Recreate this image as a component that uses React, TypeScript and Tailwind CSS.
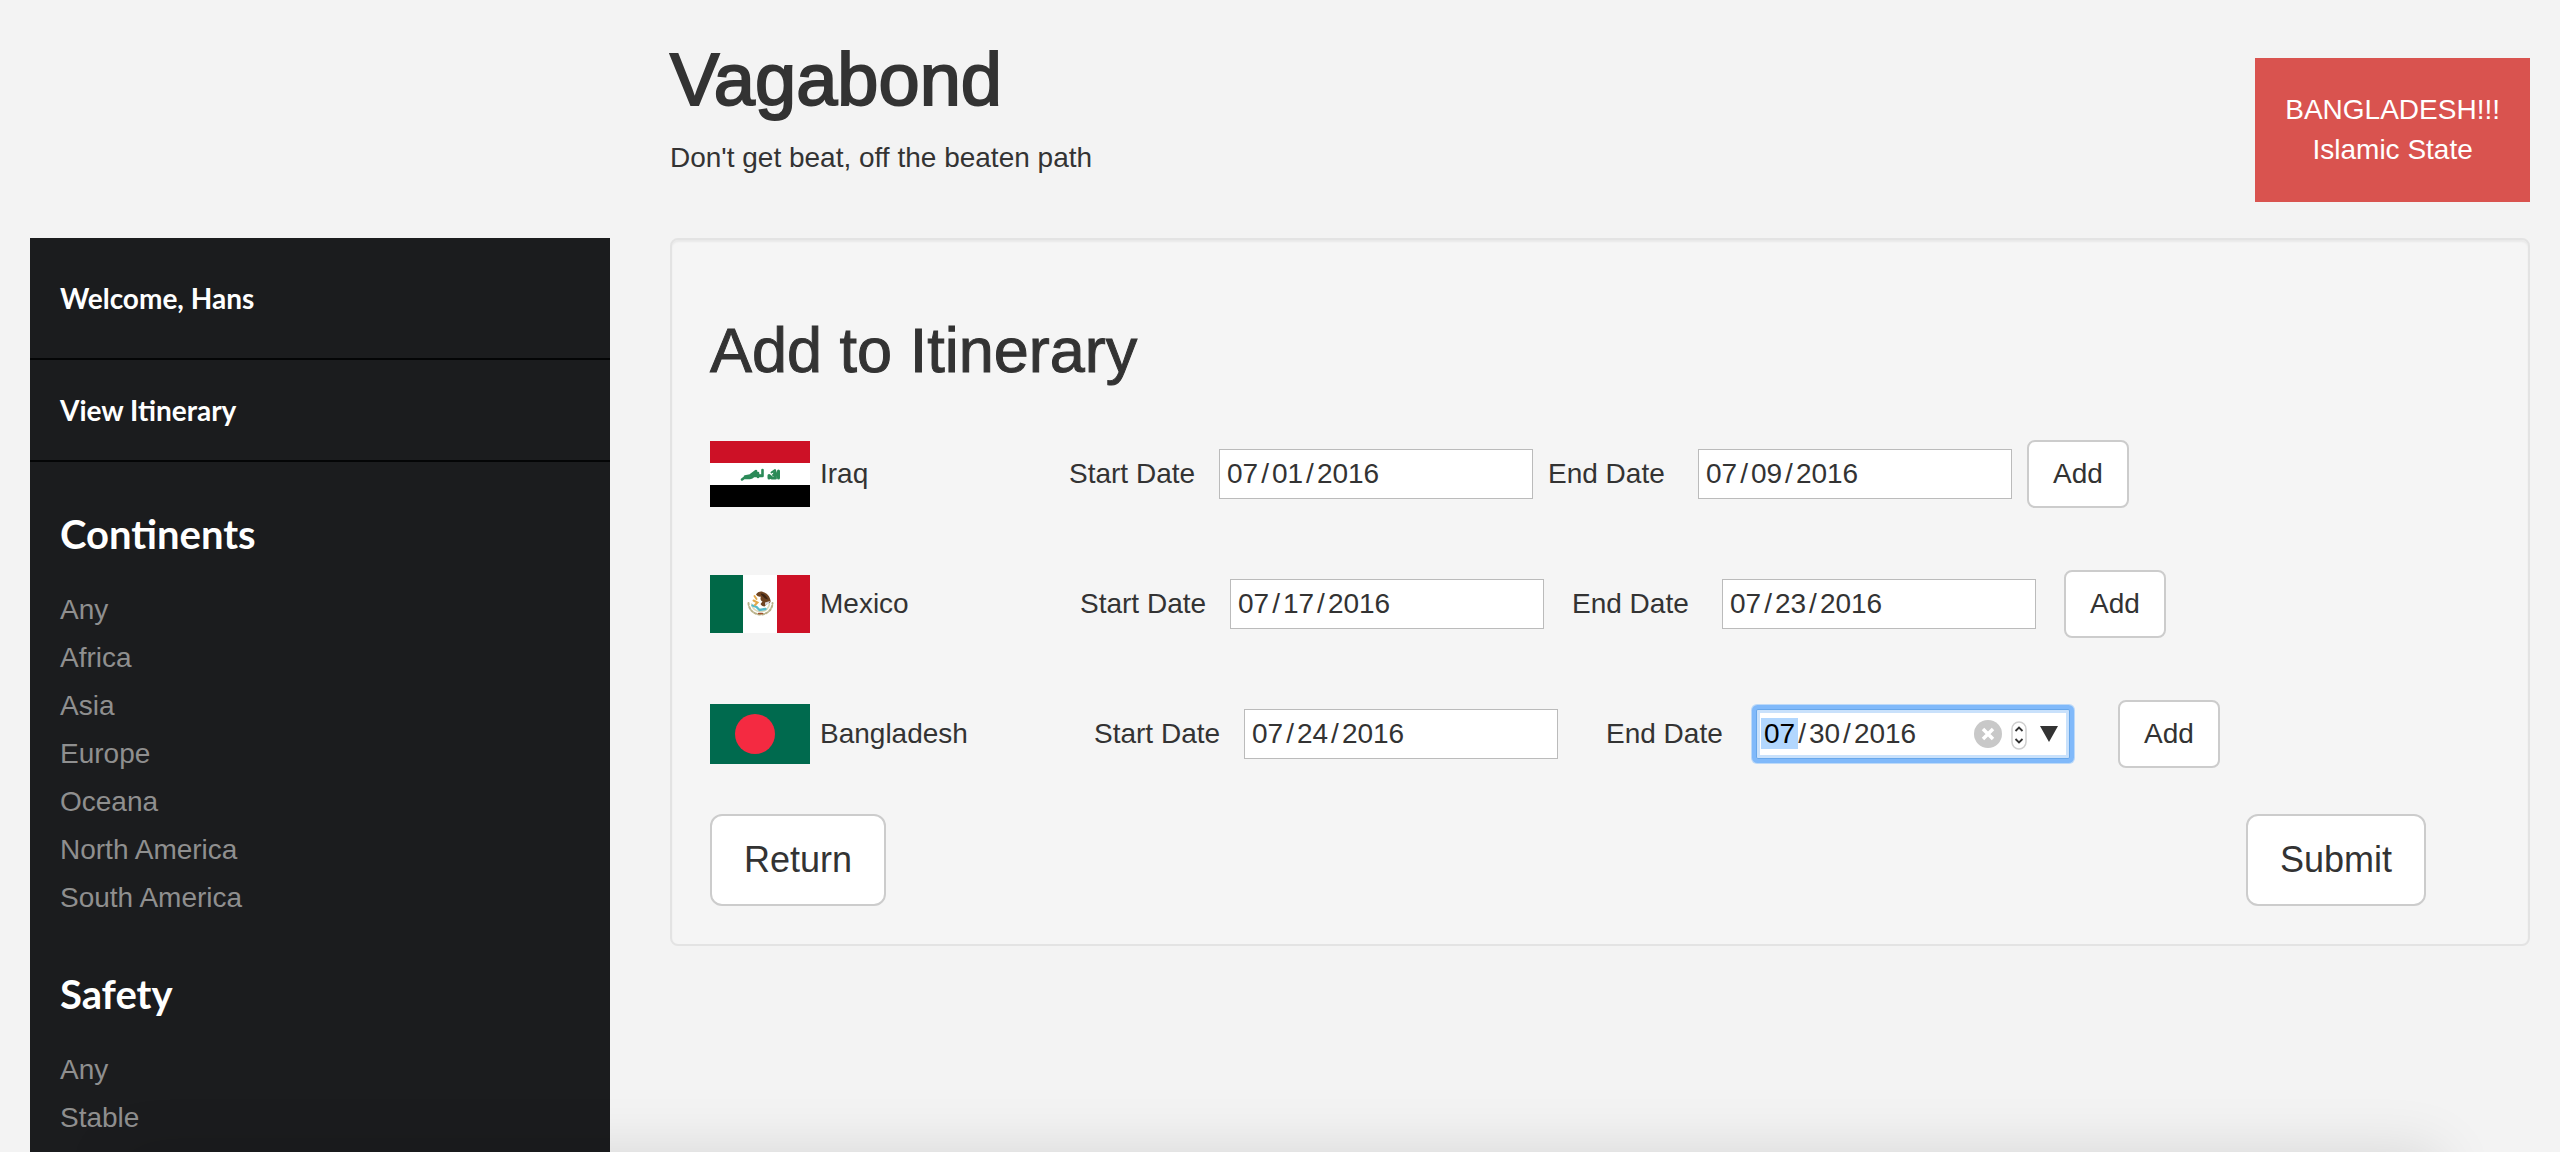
import React from "react";

function IraqFlag() {
  return (
    <svg viewBox="0 0 100 66" className="h-[66px] w-[100px]" role="img" aria-label="Flag of Iraq">
      <rect width="100" height="66" fill="#fff" />
      <rect width="100" height="22" fill="#cd1126" />
      <rect y="44" width="100" height="22" fill="#000" />
      <g fill="none" stroke="#2b8a58" strokeLinecap="round" strokeLinejoin="round">
        <path strokeWidth="2.600" d="M32 38.500l2-1.500h4c3 0 4-.5 5-2h9.500v-6" />
        <path strokeWidth="2.600" d="M35 35.500l5-1 6-4.500M42 36l5-4M48 36v-4M44 34.500h7" />
        <path strokeWidth="3" d="M59 37v-2.500l3 2.500h3.500l-1-5M68.500 37v-7" />
        <path strokeWidth="2" d="M61.500 31.500l3.500-2.500 2 6M63 34h4" />
      </g>
    </svg>
  );
}

function MexicoFlag() {
  return (
    <svg viewBox="0 0 100 58" className="h-[58px] w-[100px]" role="img" aria-label="Flag of Mexico">
      <rect width="100" height="58" fill="#fff" />
      <rect width="33" height="58" fill="#006847" />
      <rect x="67" width="33" height="58" fill="#cd1126" />
      <g fill="none" strokeLinecap="round">
        <path stroke="#b9b28a" strokeWidth="2" strokeDasharray="2 2" d="M38.500 28c0 6 5 11.500 12 11.500S62.500 34 62.500 28" />
        <path stroke="#dcd8b8" strokeWidth="1.500" d="M41.500 29c1 4.500 4.500 7.500 9 7.500s8-3 9-7.500" />
        <path stroke="#58bac9" strokeWidth="2.400" d="M42.500 30.500l4 1.500 3 3 6-1" />
        <path stroke="#e2a94c" strokeWidth="2" d="M43.500 25.500l4 2-2.500 2.500M44.500 21l2 3" />
        <path stroke="#a0522d" strokeWidth="1.400" d="M48.500 38.500h4" />
      </g>
      <path fill="#6f4422" d="M46 19.500c1.500-2.500 4.500-3.500 7-2.500 4 1 7 4.500 7.500 8.500.5 2-1 3-3 3l-3 3c-1.500 0-3-1-4-2.500l2-2.500c-2-1-2.500-3-1.500-5-1.500.5-3.500 0-5-2z" />
      <path fill="#3c2414" d="M51 18.500c3 0 6 3 7 6l-3-1-4-4z" />
      <path fill="#d8d6da" d="M55 27.500l5-1.500-1.500 3-3.500 1z" />
    </svg>
  );
}

function BangladeshFlag() {
  return (
    <svg viewBox="0 0 100 60" className="h-[60px] w-[100px]" role="img" aria-label="Flag of Bangladesh">
      <rect width="100" height="60" fill="#006a4e" />
      <circle cx="45" cy="30" r="20" fill="#f42a41" />
    </svg>
  );
}

type Country = {
  name: string;
  flag: React.ReactNode;
  start: string;
  end: string;
  countryWidth: string;
  gap: string;
  active?: boolean;
};

const countries: Country[] = [
  { name: "Iraq", flag: <IraqFlag />, start: "2016-07-01", end: "2016-07-09", countryWidth: "w-[359px]", gap: "gap-[15px]" },
  { name: "Mexico", flag: <MexicoFlag />, start: "2016-07-17", end: "2016-07-23", countryWidth: "w-[370px]", gap: "gap-7" },
  { name: "Bangladesh", flag: <BangladeshFlag />, start: "2016-07-24", end: "2016-07-30", countryWidth: "w-[384px]", gap: "gap-12", active: true },
];

const inputBase =
  "h-[50px] w-full border bg-white pl-1 text-[28px] leading-9 text-[#333] outline-none [&::-webkit-calendar-picker-indicator]:hidden [&::-webkit-datetime-edit]:p-0 [&::-webkit-datetime-edit-month-field]:px-[3px] [&::-webkit-datetime-edit-day-field]:px-[3px] [&::-webkit-datetime-edit-year-field]:px-[3px]";

function DateField({ id, label, value, active }: { id: string; label: string; value: string; active?: boolean }) {
  return (
    <div className="flex shrink-0 items-center">
      <label htmlFor={id} className="w-[150px]">
        {label}
      </label>
      <div className="relative w-[314px]">
        <input
          id={id}
          type="date"
          defaultValue={value}
          className={
            active
              ? `${inputBase} rounded-[2px] border-[#68a7ea] shadow-[inset_0_0_0_3px_#c9e1fb,0_0_0_4px_#80b9fa,0_0_0_5px_#bcd9f8] [&::-webkit-datetime-edit-month-field]:rounded-none [&::-webkit-datetime-edit-month-field]:bg-[#b2d7fe] [&::-webkit-datetime-edit-month-field]:text-black`
              : `${inputBase} border-[#bbb]`
          }
        />
        {active && (
          <div className="absolute inset-y-0 right-3 flex items-center gap-[9px]">
            <button type="button" aria-label="Clear date">
              <svg viewBox="0 0 28 28" className="size-7">
                <circle cx="14" cy="14" r="14" fill="#c8c8c8" />
                <path d="M9 9l10 10M19 9L9 19" stroke="#fff" strokeWidth="3.500" />
              </svg>
            </button>
            <button type="button" aria-label="Step date">
              <svg viewBox="0 0 16 32" className="h-8 w-4">
                <rect x="1" y="4" width="14" height="27" rx="7" fill="#fff" stroke="#cfcfcf" strokeWidth="1.500" />
                <path d="M4.500 13L8 9.500l3.500 3.500M4.500 21L8 24.500l3.500-3.500" fill="none" stroke="#333" strokeWidth="1.800" />
              </svg>
            </button>
            <button type="button" aria-label="Open calendar" className="ml-1">
              <svg viewBox="0 0 18 16" className="h-4 w-[18px]">
                <path d="M0 0h18L9 16z" fill="#333" />
              </svg>
            </button>
          </div>
        )}
      </div>
    </div>
  );
}

function FilterGroup({ title, options }: { title: string; options: string[] }) {
  return (
    <section className="px-[30px] pt-[50px]">
      <h3 className="mb-[30px] font-[Lato,sans-serif] text-[40px] leading-[44px] font-bold text-white">{title}</h3>
      <ul>
        {options.map((option) => (
          <li key={option} className="leading-[48px]">
            <a href="#" className="text-[#8f8f8f]">
              {option}
            </a>
          </li>
        ))}
      </ul>
    </section>
  );
}

export default function App() {
  return (
    <div className="relative flex h-screen flex-col overflow-hidden bg-[#f3f3f3] font-['Liberation_Sans',Arial,sans-serif] text-[28px] leading-10 text-[#333]">
      <header className="flex shrink-0 items-start pb-[36px]">
        <div className="ml-[25%] flex w-3/4 items-start justify-between px-[30px]">
          <div className="pt-10 pb-6">
            <h1 className="mb-[18px] text-[74px] leading-[80px] [-webkit-text-stroke:2px_#333]">Vagabond</h1>
            <p>Don't get beat, off the beaten path</p>
          </div>
          <div className="mt-[58px] bg-[#d9534f] px-[30px] py-8 text-center text-white">
            <p>BANGLADESH!!!</p>
            <p>Islamic State</p>
          </div>
        </div>
      </header>

      <div className="flex flex-1">
        <div className="flex w-1/4 px-[30px]">
          <aside className="w-full bg-[#1b1c1e]">
            <nav className="font-[Lato,sans-serif] font-bold text-white">
              <div className="border-b-2 border-[#040506] px-[30px] py-10">Welcome, Hans</div>
              <a href="#" className="block border-b-2 border-[#040506] px-[30px] py-[30px]">
                View Itinerary
              </a>
            </nav>
            <FilterGroup
              title="Continents"
              options={["Any", "Africa", "Asia", "Europe", "Oceana", "North America", "South America"]}
            />
            <FilterGroup title="Safety" options={["Any", "Stable"]} />
          </aside>
        </div>

        <main className="w-3/4 px-[30px]">
          <form
            onSubmit={(event) => event.preventDefault()}
            className="rounded-lg border-2 border-[#e3e3e3] bg-[#f5f5f5] p-[38px] shadow-[inset_0_2px_2px_rgba(0,0,0,0.05)]"
          >
            <h2 className="mt-[38px] mb-14 text-[63px] leading-[68px] [-webkit-text-stroke:1px_#333]">Add to Itinerary</h2>
            <div className="flex flex-col gap-[62px]">
              {countries.map((c) => (
                <div key={c.name} className="flex items-center">
                  <div className={`flex shrink-0 items-center gap-[10px] ${c.countryWidth}`}>
                    {c.flag}
                    <span>{c.name}</span>
                  </div>
                  <div className={`flex items-center ${c.gap}`}>
                    <DateField id={`${c.name}-start`} label="Start Date" value={c.start} />
                    <DateField id={`${c.name}-end`} label="End Date" value={c.end} active={c.active} />
                    <button type="button" className="rounded-lg border-2 border-[#ccc] bg-white px-6 py-3">
                      Add
                    </button>
                  </div>
                </div>
              ))}
            </div>
            <div className="mt-[46px] flex justify-between pr-16 text-4xl leading-[48px]">
              <button type="button" className="rounded-xl border-2 border-[#ccc] bg-white px-8 py-5">
                Return
              </button>
              <button type="submit" className="rounded-xl border-2 border-[#ccc] bg-white px-8 py-5">
                Submit
              </button>
            </div>
          </form>
        </main>
      </div>

      <div className="pointer-events-none absolute inset-x-[120px] top-full h-20 shadow-[0_0_60px_rgba(0,0,0,0.12)]" />
    </div>
  );
}
